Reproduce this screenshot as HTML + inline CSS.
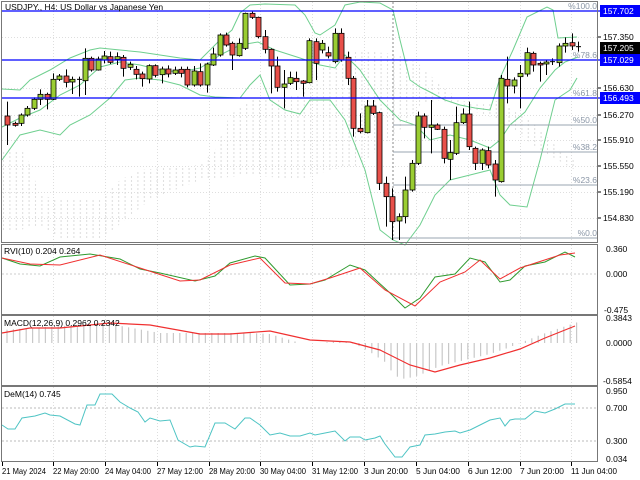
<!DOCTYPE html>
<html><head><meta charset="utf-8"><style>
html,body{margin:0;padding:0;background:#fff;width:640px;height:480px;overflow:hidden}
svg{display:block;font-family:"Liberation Sans",sans-serif;font-size:9px}
</style></head><body>
<svg id="s" width="640" height="480" xmlns="http://www.w3.org/2000/svg">
<defs>
<pattern id="cl" width="6.4" height="4" patternUnits="userSpaceOnUse"><rect x="3" y="0" width="1" height="2" fill="#dcdcdc"/></pattern>
</defs>
<rect x="0" y="0" width="640" height="480" fill="#fff"/>
<g id="grid" stroke="#dedede" stroke-dasharray="1,2" stroke-width="1"></g>
<polygon fill="url(#cl)" points="2,150 25,150 40,195 60,200 100,200 120,180 140,170 200,165 215,150 230,115 250,100 270,100 300,95 320,70 340,50 360,50 400,55 420,65 440,85 460,100 480,105 500,100 530,120 560,150 575,160 575,170 540,150 500,120 470,110 440,100 420,105 400,130 360,165 330,170 300,180 250,175 200,180 150,200 100,240 60,238 40,225 20,230 2,230"/>
<g id="bb" fill="none" stroke="#6fcf8f" stroke-width="1"></g>
<g stroke="#9aa4b0" stroke-width="1">
<line x1="393" y1="125" x2="597" y2="125"/><line x1="393" y1="152" x2="597" y2="152"/><line x1="393" y1="185" x2="597" y2="185"/><line x1="393" y1="238" x2="597" y2="238"/>
</g>
<line x1="393" y1="2" x2="393" y2="242" stroke="#888" stroke-dasharray="2,2"/>
<g fill="#8a96a6" font-size="8.5" text-anchor="end"><text x="597" y="9">%100.0</text><text x="597" y="58">%78.6</text><text x="597" y="96">%61.8</text><text x="597" y="123">%50.0</text><text x="597" y="150">%38.2</text><text x="597" y="183">%23.6</text><text x="597" y="236">%0.0</text></g>
<g id="cd"></g>
<g stroke="#0000ff" stroke-width="1.2"><line x1="2" y1="11" x2="600" y2="11"/><line x1="2" y1="60" x2="600" y2="60"/><line x1="2" y1="98" x2="600" y2="98"/></g>
<text x="5" y="10" fill="#000" font-size="8.5">USDJPY., H4:  US Dollar vs Japanese Yen</text>
<g fill="none" stroke="#777" stroke-width="1">
<rect x="1.5" y="1.5" width="596" height="241"/>
<rect x="1.5" y="244.5" width="596" height="70"/>
<rect x="1.5" y="315.5" width="596" height="70"/>
<rect x="1.5" y="386.5" width="596" height="75"/>
</g>
<g font-size="8.5" fill="#000">
<rect x="600" y="5" width="40" height="12" fill="#0000ff"/><text x="603" y="14" fill="#fff">157.702</text>
<text x="603" y="40">157.350</text>
<rect x="600" y="42" width="40" height="12" fill="#000"/><text x="603" y="51" fill="#fff">157.205</text>
<rect x="600" y="54" width="40" height="12" fill="#0000ff"/><text x="603" y="63" fill="#fff">157.029</text>
<text x="603" y="91">156.630</text>
<rect x="600" y="92" width="40" height="12" fill="#0000ff"/><text x="603" y="101" fill="#fff">156.493</text>
<text x="603" y="118">156.270</text><text x="603" y="143">155.910</text><text x="603" y="169">155.550</text><text x="603" y="195">155.190</text><text x="603" y="221">154.830</text>
<text x="606" y="252">0.360</text><text x="606" y="277">0.000</text><text x="604" y="313">-0.475</text>
<text x="606" y="321">0.3843</text><text x="606" y="346">0.0000</text><text x="603" y="384">-0.5854</text>
<text x="606" y="394">0.950</text><text x="606" y="411">0.700</text><text x="606" y="444">0.300</text><text x="606" y="462">0.034</text>
</g>
<g stroke="#000"><line x1="598" y1="37" x2="601" y2="37"/><line x1="598" y1="88" x2="601" y2="88"/><line x1="598" y1="115" x2="601" y2="115"/><line x1="598" y1="140" x2="601" y2="140"/><line x1="598" y1="166" x2="601" y2="166"/><line x1="598" y1="192" x2="601" y2="192"/><line x1="598" y1="218" x2="601" y2="218"/></g>
<line x1="2" y1="274" x2="597" y2="274" stroke="#ccc" stroke-dasharray="2,2"/>
<polyline fill="none" stroke="#2e9a2e" points="2,258 20,264 40,266 60,257 90,254 120,259 140,269 160,273 195,281 215,276 230,263 255,256 265,258 290,285 310,284 325,280 350,265 365,270 390,293 405,308 420,298 435,277 455,274 470,258 485,262 500,282 510,280 525,266 545,262 565,252 575,257"/>
<polyline fill="none" stroke="#f03030" points="2,258 30,264 60,265 100,255 140,268 180,281 200,280 230,265 260,258 285,283 310,284 330,278 360,268 385,290 415,306 440,282 465,272 480,260 500,279 520,268 560,255 575,253"/>
<text x="4" y="254" font-size="8.5">RVI(10) 0.204 0.264</text>
<g id="hist" stroke="#c8c8c8" stroke-width="1.2"></g>
<polyline fill="none" stroke="#f03030" stroke-width="1.2" points="2,333 30,328 60,328 110,323 150,325 200,334 230,334 270,331 310,340 350,342 380,350 410,365 435,372 460,365 490,358 520,349 545,338 575,326"/>
<text x="4" y="326" font-size="8.5">MACD(12,26,9) 0.2962 0.2342</text>
<g stroke="#bbb" stroke-dasharray="2,2"><line x1="2" y1="408" x2="597" y2="408"/><line x1="2" y1="441" x2="597" y2="441"/></g>
<polyline fill="none" stroke="#4ec4c4" points="2,425 8,429 15,429 22,418 35,416 45,413 50,415 60,416 75,424 80,425 87,405 95,405 100,394 112,394 120,402 130,408 138,412 145,422 150,418 160,421 170,420 178,440 190,447 195,446 205,447 215,423 225,423 235,429 245,418 250,418 260,425 270,435 280,433 290,436 300,436 310,433 315,435 325,433 335,431 345,441 350,437 360,437 365,440 375,438 380,436 385,444 395,457 402,457 410,447 420,445 425,435 435,434 445,432 455,431 460,433 470,430 480,425 490,420 500,418 505,426 510,420 515,419 525,419 535,411 545,413 555,409 565,404 575,404"/>
<text x="4" y="397" font-size="8.5">DeM(14) 0.745</text>
<g id="dates" font-size="8.5"></g>
</svg>
<script>
var N="http://www.w3.org/2000/svg";
function el(p,t,a){var e=document.createElementNS(N,t);for(var k in a)e.setAttribute(k,a[k]);p.appendChild(e);return e;}
var dx=[2,53,105,157,209,260,312,364,416,468,520,571];
var dl=["21 May 2024","22 May 20:00","24 May 04:00","27 May 12:00","28 May 20:00","30 May 04:00","31 May 12:00","3 Jun 20:00","5 Jun 04:00","6 Jun 12:00","7 Jun 20:00","11 Jun 04:00"];
var g=document.getElementById("grid"),D=document.getElementById("dates");
dx.forEach(function(x,i){
 if(i>0){[[2,242],[245,314],[316,385],[387,461]].forEach(function(r){el(g,"line",{x1:x+.5,y1:r[0],x2:x+.5,y2:r[1]});});}
 el(D,"line",{x1:x+.5,y1:462,x2:x+.5,y2:466,stroke:"#000"});
 var w=dl[i].length>11?46:(dl[i].length>10?44:40);
 var t=el(D,"text",{x:x,y:474,textLength:w,lengthAdjust:"spacingAndGlyphs"});t.textContent=dl[i];
});
[37,88,115,140,166,192,218].forEach(function(y){el(g,"line",{x1:2,y1:y+.5,x2:597,y2:y+.5});});
var bb=document.getElementById("bb");
el(bb,"polyline",{points:"2,89 20,90 30,80 50,70 70,58 90,50 100,48 120,50 140,52 160,55 180,58 200,60 210,50 220,40 232,30 240,13 250,5 265,4 295,5 305,15 315,33 320,35 335,25 345,5 360,2 380,3 393,10 400,40 410,80 420,87 430,92 445,100 460,105 475,108 490,110 500,78 513,50 527,17 547,7 553,10 558,38 577,37"});
el(bb,"polyline",{points:"2,127 20,118 40,110 60,95 80,85 100,67 120,62 140,65 160,70 180,72 200,68 210,62 220,55 240,45 258,42 275,50 300,58 320,65 335,68 345,55 360,70 380,100 400,120 415,125 430,140 450,135 470,140 490,148 500,140 510,125 525,112 540,88 555,70 565,62 578,57"});
el(bb,"polyline",{points:"2,160 20,135 40,130 60,135 70,125 90,115 110,98 125,80 140,78 160,80 180,85 200,95 215,97 240,98 250,85 260,75 270,100 285,110 300,114 310,100 320,100 330,100 345,120 365,170 380,230 393,240 405,245 420,225 435,195 450,180 470,175 490,170 500,195 510,205 527,207 540,160 555,100 570,90 577,78"});
var C1=[[7,348,375,305,435,0],[15,370,376,365,380,0],[21,345,370,340,378,1],[27,325,345,318,350,1],[34,298,325,292,330,1],[40,283,298,268,315,1],[47,283,298,278,328,0],[53,238,298,220,300,1],[59,228,238,222,243,1],[66,228,247,208,262,0],[72,238,246,230,282,1],[79,238,241,230,290,1],[85,175,242,145,285,1],[91,175,210,170,215,0],[98,177,210,170,212,1],[104,168,180,153,190,1],[110,170,187,155,192,0],[117,170,178,157,195,1],[123,172,205,165,230,0],[130,193,202,185,210,1],[136,208,223,198,238,0],[142,222,236,215,260,0],[149,197,237,193,250,1],[155,197,226,193,232,0],[162,207,224,200,250,1],[168,207,222,196,232,0],[175,210,220,200,225,1],[181,208,220,200,232,0],[187,208,255,200,262,0],[194,213,255,198,260,1],[200,215,255,190,260,0],[207,192,255,188,278,1],[213,162,195,143,198,1],[220,105,165,100,170,1],[226,105,135,98,140,0],[232,130,165,125,210,0],[239,130,167,115,170,1],[245,40,145,38,150,1],[252,40,52,35,57,0],[258,52,110,50,115,0],[265,110,148,90,160,0],[271,148,198,145,280,0],[277,198,262,170,275,0],[284,252,262,210,325,1],[290,233,250,215,255,1],[296,235,245,215,270,0],[303,243,250,240,290,0],[309,122,248,115,250,1],[316,125,190,115,240,0],[322,130,150,120,160,1],
[328,158,168,140,175,0],[335,100,185,85,190,1],[341,100,180,85,185,0],[348,172,235,155,255,0],[353,235,385,228,410,0],[360,385,395,340,400,0],[367,318,398,300,400,1],[373,318,340,300,345,0],[379,338,550,335,570,0],[386,550,590,530,680,0],[392,590,665,565,720,0],[399,650,663,640,720,1],[405,570,650,530,670,1],[412,490,570,480,575,1],[418,348,490,335,495,1],[424,348,382,340,415,0],[431,375,382,300,460,1],[437,375,388,370,390,0],[444,388,475,380,490,0],[450,458,478,420,540,1],[456,368,460,320,465,1],[463,342,368,325,372,1],[469,342,440,305,450,0],[475,445,490,440,510,0],[482,450,490,445,510,1],[488,452,495,440,505,0],[495,492,540,480,590,0],[501,235,545,225,548,1],[507,238,258,170,310,0],[514,240,258,232,280,1],[520,220,230,195,325,1],[527,158,222,143,230,1],[533,160,195,155,215,0],[540,190,195,185,245,0],[546,186,192,180,225,1],[552,185,188,175,195,1],[559,138,188,130,200,1],[565,130,138,112,158,1],[572,128,138,100,150,0],[578,140,143,125,155,0]];
var cd=document.getElementById("cd");
C1.forEach(function(c){
 var x=c[0]+.5,t=c[1]/3,b=c[2]/3,h=c[3]/3,l=c[4]/3;
 el(cd,"line",{x1:x,y1:h,x2:x,y2:l,stroke:"#000"});
 if(b-t<1.2){el(cd,"line",{x1:x-2.5,y1:t,x2:x+2.5,y2:t,stroke:"#000"});}
 else el(cd,"rect",{x:x-2.5,y:t,width:5,height:b-t,fill:c[5]?"#9acd32":"#e8504a",stroke:"#000","stroke-width":.8});
});
var hp=[[2,330],[60,326],[110,324],[160,333],[250,333],[270,334],[290,340],[300,343],[320,343],[340,341],[355,344],[370,352],[385,362],[395,376],[405,379],[420,375],[440,366],[465,360],[490,354],[505,349],[520,343],[540,335],[560,328],[578,322]];
function hv(x){for(var i=0;i<hp.length-1;i++){if(x>=hp[i][0]&&x<=hp[i+1][0]){var f=(x-hp[i][0])/(hp[i+1][0]-hp[i][0]);return hp[i][1]+f*(hp[i+1][1]-hp[i][1]);}}return 343;}
var H=document.getElementById("hist");
for(var i=0;i<90;i++){var x=7+i*6.4;var y=hv(x);el(H,"line",{x1:x,y1:343,x2:x,y2:y});}
</script>
</body></html>
